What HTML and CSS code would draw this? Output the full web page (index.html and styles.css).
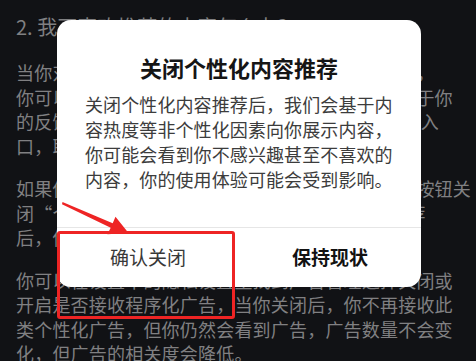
FILE: index.html
```html
<!DOCTYPE html>
<html lang="zh-CN">
<head>
<meta charset="utf-8">
<link rel="stylesheet" href="styles.css">
</head>
<body>
<main class="page">
  <h2 class="page-title">2. 我不喜欢推荐的内容怎么办？</h2>
  <p class="para">
    <span class="ln">当你对某些推荐的视频内容并不感兴趣或不喜欢时，</span>
    <span class="ln">你可以长按视频或点击分享中不感兴趣，系统会基于你</span>
    <span class="ln">的反馈减少此类内容推荐，也可以在设置中找到相 入</span>
    <span class="ln">口，取消个性化推荐。</span>
  </p>
  <p class="para">
    <span class="ln">如果你不想看到个性化推荐，可在隐私设置中找到按钮关</span>
    <span class="ln">闭“个性化内容推荐”，关闭后将为你减少个性推荐</span>
    <span class="ln">后，你看到的内容将更加多样。</span>
  </p>
  <p class="para">
    <span class="ln">你可以在设置中的隐私设置里找到广告管理选择关闭或</span>
    <span class="ln">开启是否接收程序化广告，当你关闭后，你不再接收此</span>
    <span class="ln">类个性化广告，但你仍然会看到广告，广告数量不会变</span>
    <span class="ln">化，但广告的相关度会降低。</span>
  </p>
</main>

<div class="dialog">
  <div class="dialog-body">
    <h3 class="dialog-title">关闭个性化内容推荐</h3>
    <p class="dialog-text">
      <span class="ln">关闭个性化内容推荐后，我们会基于内</span>
      <span class="ln">容热度等非个性化因素向你展示内容，</span>
      <span class="ln">你可能会看到你不感兴趣甚至不喜欢的</span>
      <span class="ln">内容，你的使用体验可能会受到影响。</span>
    </p>
  </div>
  <div class="dialog-actions">
    <div class="btn btn-confirm">确认关闭</div>
    <div class="btn btn-keep">保持现状</div>
  </div>
</div>

<div class="mark-box"></div>
<svg class="mark-arrow" width="80" height="50" viewBox="55 195 80 50" xmlns="http://www.w3.org/2000/svg">
  <polygon points="62.5,202 112.7,223.2 115.5,216.8 128.5,233 107.4,234.2 110.7,227.8 62,204.2" fill="#ee2424"/>
</svg>
</body>
</html>
```

FILE: styles.css
```css
html, body {
  margin: 0;
  padding: 0;
}

body {
  width: 476px;
  height: 361px;
  overflow: hidden;
  background: #111215;
  font-family: "Noto Sans CJK SC", "Noto Sans", "Liberation Sans", sans-serif;
  position: relative;
}

.page {
  padding: 13px 16px 0 16px;
  color: #808082;
}

.page-title {
  margin: 0 0 19px 0;
  font-size: 20px;
  line-height: 28px;
  font-weight: 400;
  white-space: nowrap;
}

.para {
  margin: 0 0 18px 0;
  font-size: 18px;
  line-height: 24.5px;
  letter-spacing: 0.2px;
}

.ln {
  display: block;
  white-space: nowrap;
}

.dialog {
  position: absolute;
  left: 57px;
  top: 20px;
  width: 364px;
  height: 267px;
  background: #ffffff;
  border-radius: 14px;
  display: flex;
  flex-direction: column;
  overflow: hidden;
}

.dialog-body {
  padding: 32px 0 0 28px;
  height: 175px;
  border-bottom: 1px solid #e6e6e6;
}

.dialog-title {
  margin: 0 0 10px -28px;
  text-align: center;
  font-size: 22px;
  line-height: 30px;
  font-weight: 600;
  color: #151515;
}

.dialog-text {
  margin: 0;
  font-size: 18px;
  line-height: 25px;
  letter-spacing: 0.1px;
  color: #3c3c3c;
}

.dialog-actions {
  flex: 1;
  display: flex;
}

.btn {
  flex: 1;
  display: flex;
  align-items: center;
  justify-content: center;
  font-size: 19px;
  padding-bottom: 2px;
}

.btn-confirm {
  color: #383838;
}

.btn-keep {
  color: #121212;
  font-weight: 700;
}

.mark-box {
  position: absolute;
  left: 57px;
  top: 231px;
  width: 172px;
  height: 82px;
  border: 3px solid #ee2424;
  border-radius: 3px;
}

.mark-arrow {
  position: absolute;
  left: 55px;
  top: 195px;
}
```
